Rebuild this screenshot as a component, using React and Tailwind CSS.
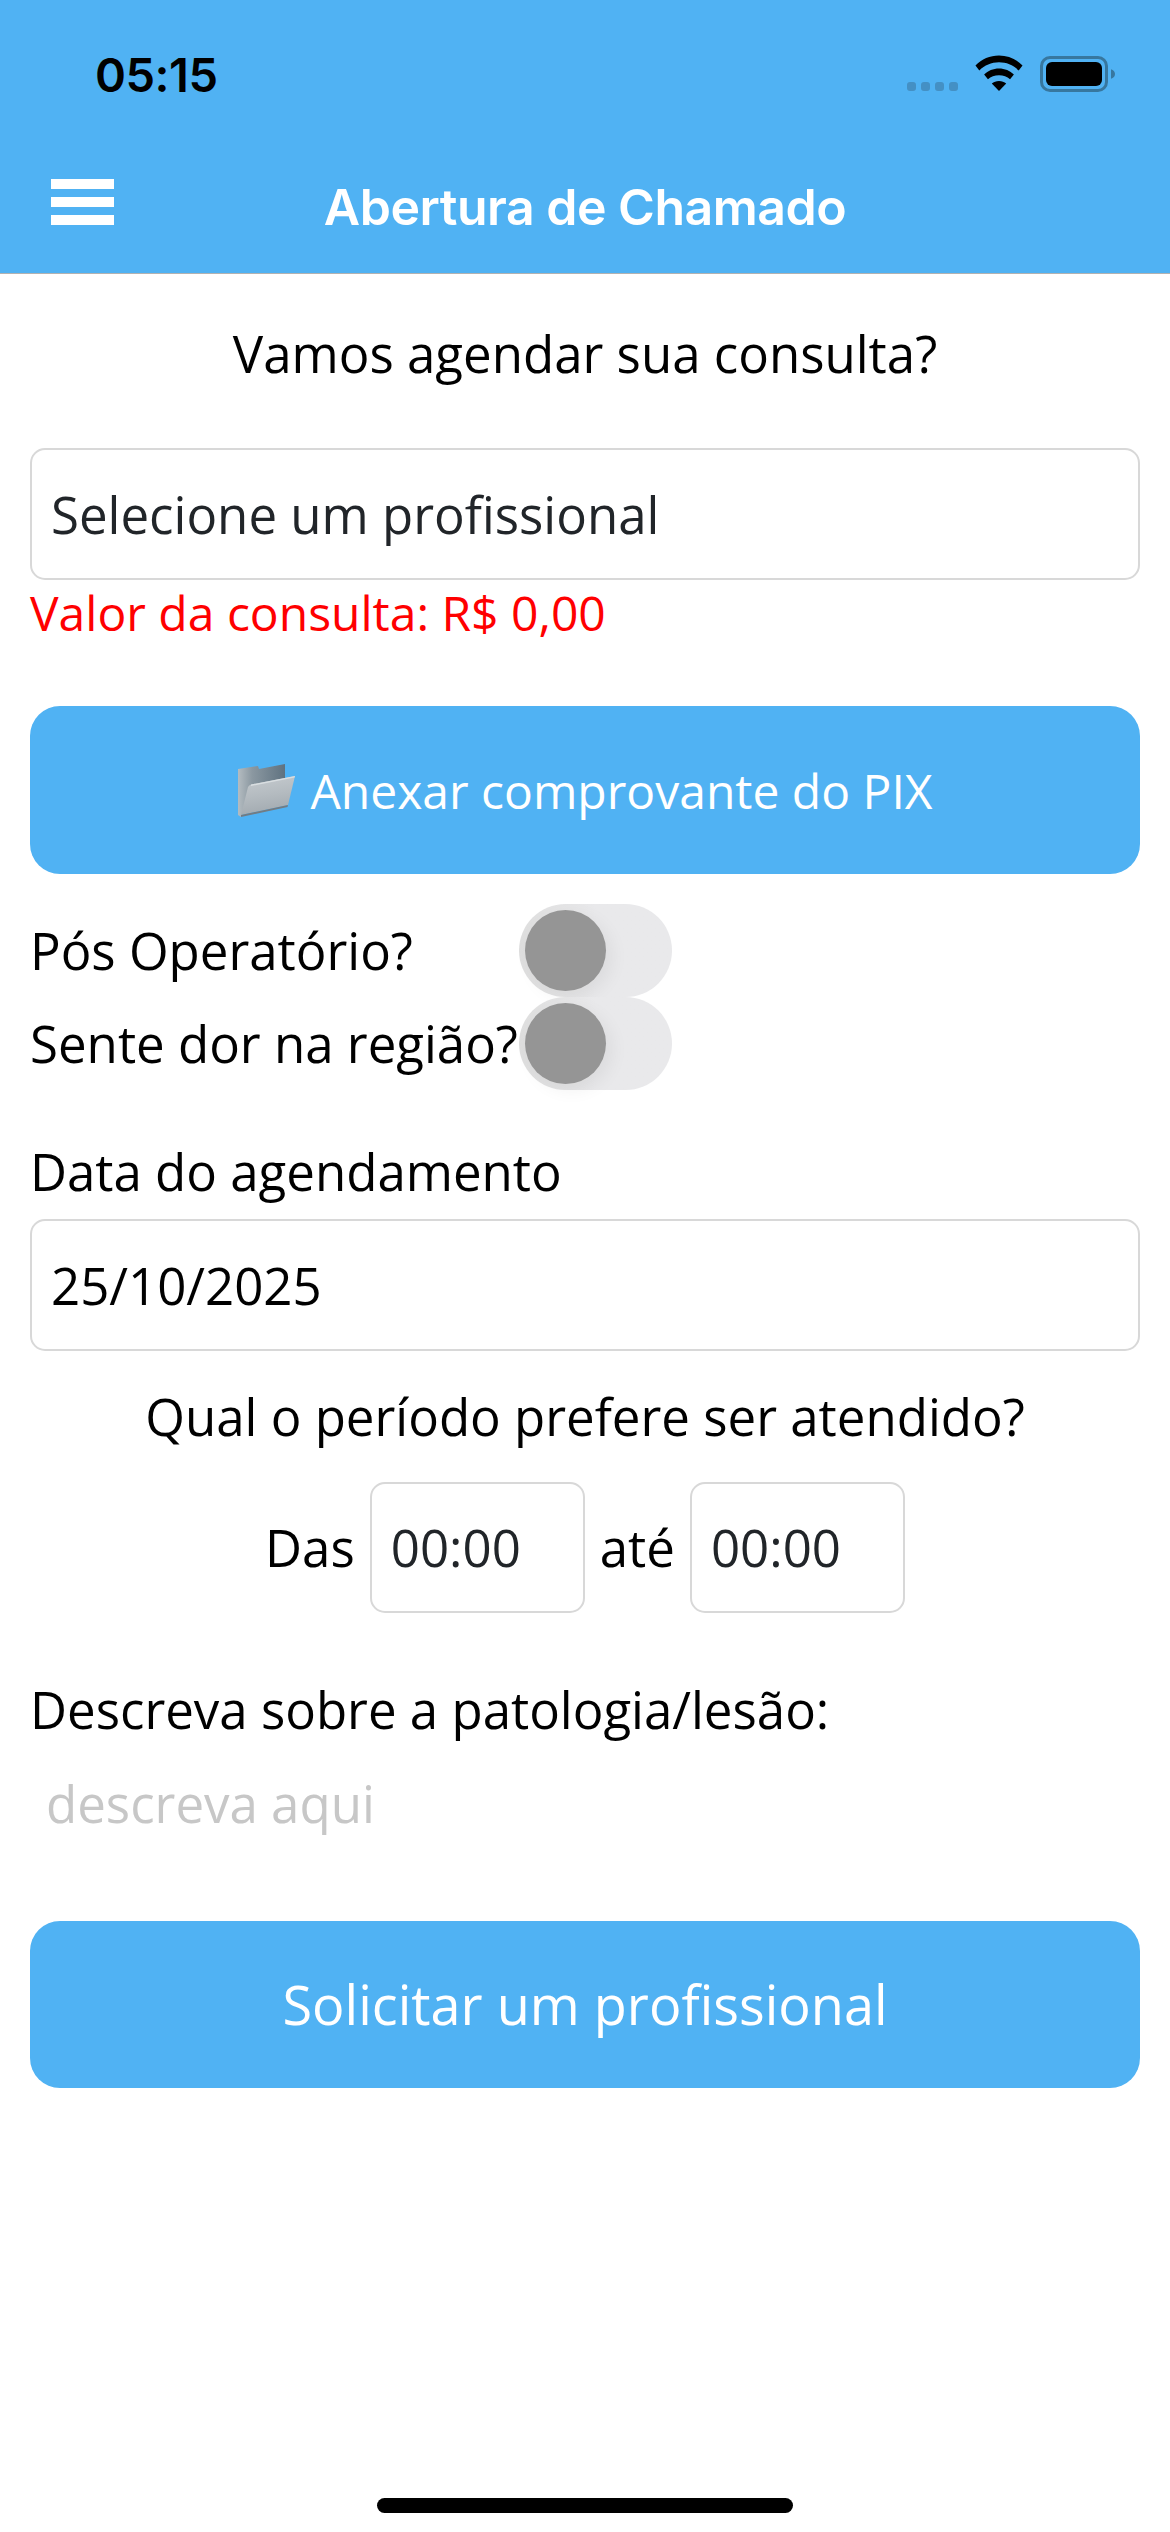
import React from "react";

const openSans = { fontFamily: '"Open Sans", sans-serif' };

const WifiIcon = () => (
  <svg width="48" height="36" viewBox="0 0 50 36" preserveAspectRatio="none" className="block -mt-[1px]">
    <path d="M0.5 10.5C7 4 15.5 0.5 25 0.5C34.5 0.5 43 4 49.5 10.5L45.5 15.5C40 10.3 33 7.3 25 7.3C17 7.3 10 10.3 4.5 15.5Z" fill="#000" />
    <path d="M9.5 19.5C13.5 15.8 19 13.5 25 13.5C31 13.5 36.5 15.8 40.5 19.5L36.5 24.3C33.5 21.7 29.5 20.2 25 20.2C20.5 20.2 16.5 21.7 13.5 24.3Z" fill="#000" />
    <path d="M17.5 28.5C19.5 27 22 26 25 26C28 26 30.5 27 32.5 28.5L25 36Z" fill="#000" />
  </svg>
);

const BatteryIcon = () => (
  <div className="flex items-center">
    <div className="w-[68px] h-[36px] rounded-[10px] border-[3px] border-[#37779f] p-[3px]">
      <div className="w-full h-full rounded-[6px] bg-black" />
    </div>
    <svg width="4" height="12" viewBox="0 0 5 12" className="ml-[3px] block">
      <path d="M0 0C3 1 5 3 5 6C5 9 3 11 0 12Z" fill="#37779f" />
    </svg>
  </div>
);

// folder emoji, traced from the reference
const FolderEmoji = () => (
  <svg width="58" height="54" viewBox="0 0 58 54" className="block">
    <defs>
      <linearGradient id="folderBack" x1="0" y1="0" x2="1" y2="0">
        <stop offset="0" stopColor="#b4bcc1" />
        <stop offset="0.3" stopColor="#8b98a1" />
        <stop offset="1" stopColor="#5f7280" />
      </linearGradient>
      <linearGradient id="folderFront" x1="0" y1="0" x2="0.2" y2="1">
        <stop offset="0" stopColor="#c6cbcf" />
        <stop offset="0.55" stopColor="#b4bbc0" />
        <stop offset="1" stopColor="#a3abb1" />
      </linearGradient>
    </defs>
    <path d="M1 6L21 3L22 6L48 1L48 16L12 24L5 53L4 54L1 52Z" fill="url(#folderBack)" />
    <path d="M14 21.5L58 13L51 42L4 52L11 24Q12 22 14 21.5Z" fill="url(#folderFront)" />
    <path d="M14 21.5L58 13L57.6 14.6L14 23Z" fill="#d9dee1" />
    <path d="M4 52L51 42L50.5 44L4 54Z" fill="#727c84" />
  </svg>
);

const Field = ({ children, className = "" }) => (
  <div className={`flex items-center px-[19px] bg-white border-2 border-[#d8d8d8] rounded-[15px] text-[51px] text-[#212529] ${className}`}>
    {children}
  </div>
);

const Toggle = () => (
  <div className="w-[153px] h-[93px] rounded-full bg-[#e9e9eb] bg-gradient-to-r from-[#dedede] to-[#e9e9eb] to-50% p-[6px] shrink-0">
    <div className="w-[81px] h-[81px] rounded-full bg-[#959595] shadow-[6px_6px_18px_rgba(0,0,0,0.06)]" />
  </div>
);

const BlueButton = ({ children, className = "" }) => (
  <div className={`rounded-[30px] bg-[#50b2f3] flex items-center justify-center text-white text-[54px] ${className}`}>
    {children}
  </div>
);

export default function App() {
  return (
    <div className="w-[1170px] h-[2532px] bg-white flex flex-col overflow-hidden text-black text-[51px] leading-[65px]" style={openSans}>
      <header className="h-[274px] bg-[#50b2f3] border-b border-[#b2b2b2] shrink-0">
        <div className="h-[132px] flex items-start justify-between pl-[95px] pr-[55px] pt-[52px]">
          <span className="text-[47px] leading-[46px] font-semibold tracking-[-0.5px] font-['Inter',sans-serif]">05:15</span>
          <div className="flex items-start mt-[4px]">
            <div className="flex gap-[5px] mr-[17px] mt-[26px]">
              <span className="w-[9px] h-[9px] rounded-[3px] bg-[#4490c4]" />
              <span className="w-[9px] h-[9px] rounded-[3px] bg-[#4490c4]" />
              <span className="w-[9px] h-[9px] rounded-[3px] bg-[#4490c4]" />
              <span className="w-[9px] h-[9px] rounded-[3px] bg-[#4490c4]" />
            </div>
            <WifiIcon />
            <div className="ml-[17px]"><BatteryIcon /></div>
          </div>
        </div>
        <div className="relative h-[141px] flex items-start justify-center">
          <div className="absolute left-[51px] top-[47px] w-[63px] flex flex-col gap-[8px]">
            <span className="h-[10px] bg-white" />
            <span className="h-[10px] bg-white" />
            <span className="h-[10px] bg-white" />
          </div>
          <span className="mt-[44px] text-white text-[50px] leading-[62px] font-semibold tracking-[-0.5px] font-['Inter',sans-serif]">Abertura de Chamado</span>
        </div>
      </header>

      <main className="px-[30px] flex-1 flex flex-col">
        <p className="mt-[47px] text-center">Vamos agendar sua consulta?</p>
        <Field className="mt-[62px] h-[132px]">Selecione um profissional</Field>
        <p className="text-[48px] text-[#ff0000]">Valor da consulta: R$ 0,00</p>

        <BlueButton className="mt-[61px] h-[168px] gap-[15px]">
          <FolderEmoji />
          <span className="text-[48px]">Anexar comprovante do PIX</span>
        </BlueButton>

        <div className="mt-[30px] h-[93px] flex items-center">
          <span className="w-[489px]">Pós Operatório?</span>
          <Toggle />
        </div>
        <div className="h-[93px] flex items-center">
          <span className="w-[489px]">Sente dor na região?</span>
          <Toggle />
        </div>

        <p className="mt-[49px]">Data do agendamento</p>
        <Field className="mt-[15px] h-[132px] !text-black">25/10/2025</Field>

        <p className="mt-[33px] text-center">Qual o período prefere ser atendido?</p>
        <div className="mt-[33px] flex items-center justify-center">
          <span>Das</span>
          <Field className="w-[215px] h-[131px] ml-[15px]">00:00</Field>
          <span className="ml-[15px]">até</span>
          <Field className="w-[215px] h-[131px] ml-[15px]">00:00</Field>
        </div>

        <p className="mt-[64px]">Descreva sobre a patologia/lesão:</p>
        <p className="mt-[29px] pl-[16px] text-[#c7c7c7]">descreva aqui</p>

        <BlueButton className="mt-[85px] h-[167px]">Solicitar um profissional</BlueButton>

        <div className="mt-auto mb-[19px] mx-auto w-[416px] h-[15px] rounded-full bg-black" />
      </main>
    </div>
  );
}
